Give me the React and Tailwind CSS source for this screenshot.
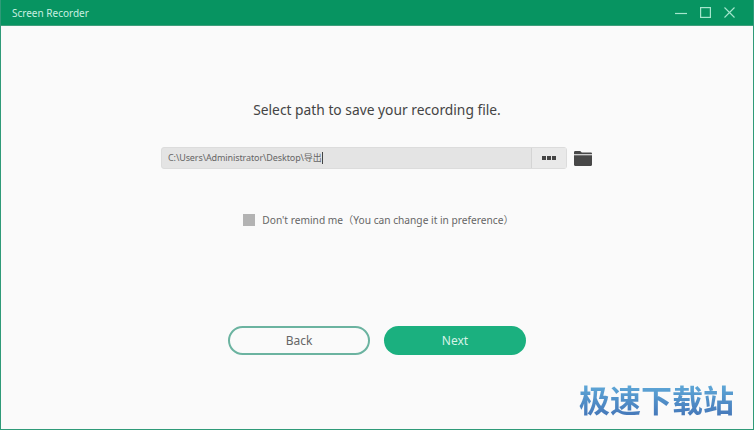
import React from "react";

const font = { fontFamily: '"Noto Sans", "Noto Sans CJK SC", sans-serif' };

function TitleBar() {
  return (
    <div className="flex h-[26px] shrink-0 items-center justify-between bg-[#079461] pl-[11px] pr-[18px] border-b border-[#3f9e7c]">
      <span className="text-[10px] leading-none text-[#c8efe0]">Screen Recorder</span>
      <div className="flex items-center gap-[13px] text-[#a5e6cd]">
        <svg width="12" height="12" viewBox="0 0 12 12" fill="none" stroke="currentColor" strokeWidth="1.2">
          <path d="M0 6.5h12" />
        </svg>
        <svg width="11" height="11" viewBox="0 0 11 11" fill="none" stroke="currentColor" strokeWidth="1.2">
          <rect x="0.6" y="0.6" width="9.8" height="9.8" />
        </svg>
        <svg width="11" height="11" viewBox="0 0 11 11" fill="none" stroke="currentColor" strokeWidth="1.1">
          <path d="M0.5 0.5l10 10M10.5 0.5l-10 10" />
        </svg>
      </div>
    </div>
  );
}

function PathRow() {
  return (
    <div className="flex items-center">
      <div className="flex h-[22px] w-[406px] items-stretch rounded-[3px] border border-[#dcdcdc] bg-[#e4e4e4]">
        <div className="flex flex-1 items-center pl-[6px] text-[9px] tracking-[-0.1px] text-[#666]">
          <span>C:\Users\Administrator\Desktop\导出</span>
          <span className="h-[12px] w-px bg-[#444]" />
        </div>
        <div className="flex w-[35px] items-center justify-center gap-px border-l border-[#d4d4d4] bg-[#e9e9e9]">
          <span className="h-[4px] w-[4px] bg-[#444]" />
          <span className="h-[4px] w-[4px] bg-[#444]" />
          <span className="h-[4px] w-[4px] bg-[#444]" />
        </div>
      </div>
      <svg className="ml-[7px]" width="18" height="15" viewBox="0 0 18 15" fill="#484848">
        <path d="M0 1.5C0 .7.5 0 1.2 0h5l1.6 1.6h9C17.5 1.6 18 2 18 2.8v.4H0z" />
        <path d="M0 4.2h18v9.6c0 .7-.5 1.2-1.2 1.2H1.2C.5 15 0 14.5 0 13.8z" />
      </svg>
    </div>
  );
}

export default function App() {
  return (
    <div style={font} className="relative flex h-[430px] w-[754px] flex-col overflow-hidden border-x border-b border-[#2f9a78] bg-[#fafafa]">
      <TitleBar />

      <main className="flex flex-1 flex-col items-center">
        <h1 className="mt-[72px] h-[24px] text-[13.8px] leading-[24px] text-[#444]">
          Select path to save your recording file.
        </h1>

        <div className="mt-[25px] pr-[1px]">
          <PathRow />
        </div>

        <label className="mt-[44px] flex items-center gap-[7px] pl-[3px]">
          <span className="h-[12px] w-[12px] bg-[#b3b3b3]" />
          <span className="text-[10.2px] leading-[14px] text-[#666]">
            Don't remind me（You can change it in preference）
          </span>
        </label>

        <div className="mt-[99px] flex gap-[14px]">
          <button className="h-[29px] w-[142px] rounded-full border-2 border-[#6bb3a0] bg-[#fafafa] text-[12px] text-[#666]">
            Back
          </button>
          <button className="h-[29px] w-[142px] rounded-full bg-[#1bb07f] text-[12px] text-[#d5f3e7]">
            Next
          </button>
        </div>
      </main>

      {/* watermark */}
      <span
        style={{ fontFamily: '"Noto Sans CJK SC", sans-serif' }}
        className="absolute left-[578px] top-[381px] bg-gradient-to-b from-[#62aedb] to-[#4476b8] bg-clip-text text-[31px] font-bold leading-[36px] text-transparent"
      >
        极速下载站
      </span>
    </div>
  );
}
